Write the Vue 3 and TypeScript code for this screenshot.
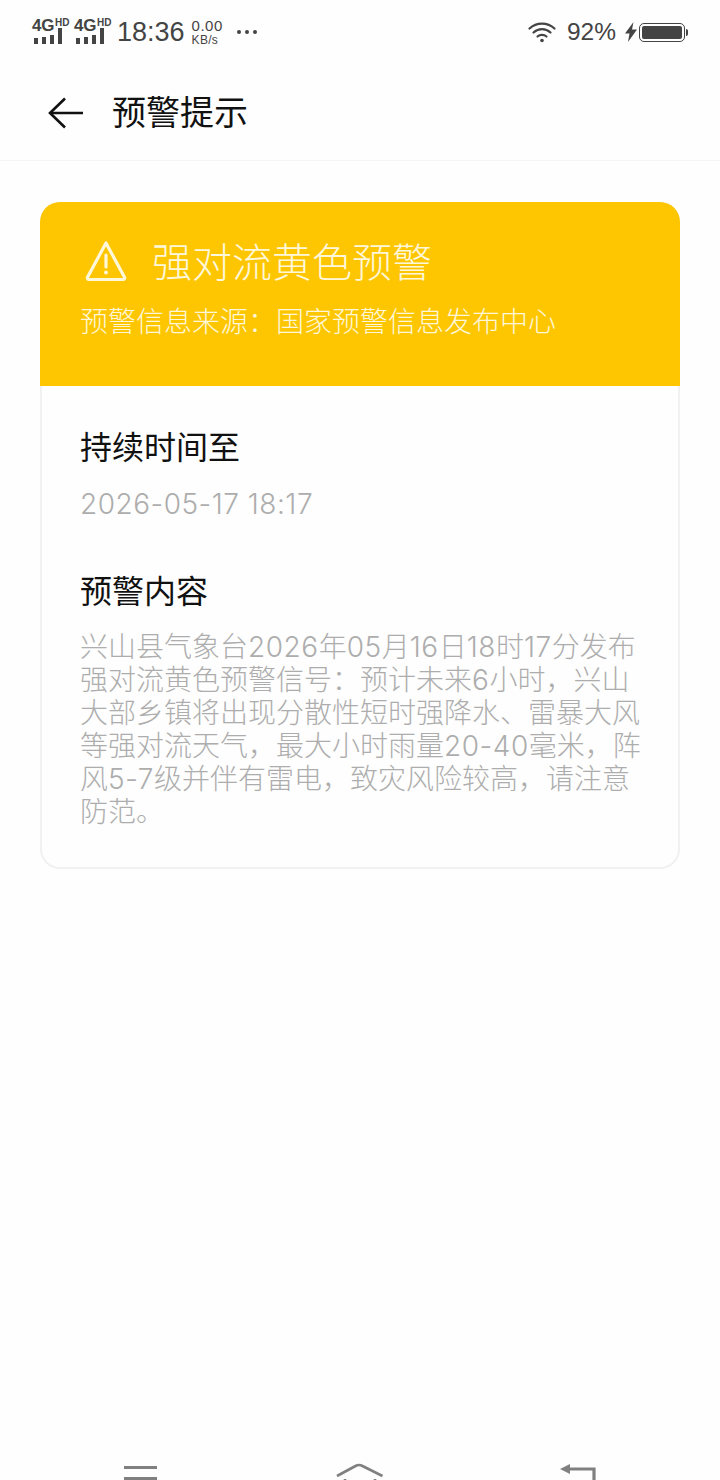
<script setup lang="ts">
const lines: string[] = [
  '兴山县气象台2026年05月16日18时17分发布',
  '强对流黄色预警信号：预计未来6小时，兴山',
  '大部乡镇将出现分散性短时强降水、雷暴大风',
  '等强对流天气，最大小时雨量20-40毫米，阵',
  '风5-7级并伴有雷电，致灾风险较高，请注意',
  '防范。',
]

const segment = (line: string): string[] => line.split(/(\d[\d-]*)/)
</script>

<template>
  <div class="page">
    <div class="status">
      <div class="status-left">
        <div v-for="n in 2" :key="n" class="net">
          <div class="net-label"><span class="g">4G</span><span class="hd">HD</span></div>
          <div class="bars"><i class="b1"></i><i class="b2"></i><i class="b3"></i><i class="b4"></i></div>
        </div>
        <span class="time">18:36</span>
        <div class="speed"><span class="rate">0.00</span><span class="kb">KB/s</span></div>
        <div class="dots"><i></i><i></i><i></i></div>
      </div>
      <div class="status-right">
        <svg class="wifi" width="28" height="22" viewBox="0 0 28 22" fill="none" stroke="#444" stroke-width="2.2" stroke-linecap="round">
          <path d="M1.5 7.5C8.5 1 19.5 1 26.5 7.5" />
          <path d="M5.5 11.5C10.5 7 17.5 7 22.5 11.5" />
          <path d="M9.5 15.5C12 13.2 16 13.2 18.5 15.5" />
          <circle cx="14" cy="19.5" r="1.8" fill="#444" stroke="none" />
        </svg>
        <span class="pct">92%</span>
        <svg class="bolt" width="12" height="20" viewBox="0 0 12 20"><path d="M8.5 0 0 11.5h4.5L3 20 12 7.5H7Z" fill="#444" /></svg>
        <div class="battery"><div class="fill"></div></div>
        <div class="nub"></div>
      </div>
    </div>

    <header class="bar">
      <svg class="back" width="36" height="32" viewBox="0 0 36 32" fill="none" stroke="#111" stroke-width="2.6">
        <path d="M35 16H2" />
        <path d="M17 1.5 2 16l15 14.5" />
      </svg>
      <h1 class="title">预警提示</h1>
    </header>

    <main class="content">
      <section class="card">
        <div class="banner">
          <div class="headline">
            <svg class="warn" width="42" height="42" viewBox="0 0 42 42" fill="none" stroke="#fff7d9" stroke-width="3.2" stroke-linejoin="round">
              <path d="M21 2 2.5 36.3a1.5 1.5 0 0 0 1.3 2.2h34.4a1.5 1.5 0 0 0 1.3-2.2Z" />
              <path d="M21 14v12" stroke-linecap="round" />
              <circle cx="21" cy="31.5" r="2" fill="#fff7d9" stroke="none" />
            </svg>
            <span class="headline-text">强对流黄色预警</span>
          </div>
          <div class="source">预警信息来源：国家预警信息发布中心</div>
        </div>
        <div class="details">
          <div class="label">持续时间至</div>
          <div class="date">2026-05-17 18:17</div>
          <div class="label second">预警内容</div>
          <div class="body">
            <div v-for="line in lines" :key="line">
              <span v-for="(part, i) in segment(line)" :key="i" :class="{ num: i % 2 === 1 }">{{ part }}</span>
            </div>
          </div>
        </div>
      </section>
    </main>

    <nav class="nav">
      <svg width="34" height="17" viewBox="0 0 34 17" fill="none" stroke="#808080" stroke-width="3"><path d="M0 4.5h33M0 15.5h33" /></svg>
      <svg width="48" height="17" viewBox="0 0 48 17" fill="none" stroke="#808080" stroke-width="2.6" stroke-linejoin="round"><path d="M2 13 20.5 3q3.5-2 7 0L47.5 13" /><path d="M10 16v1M40 16v1" /></svg>
      <svg width="36" height="17" viewBox="0 0 36 17" fill="none"><path d="M34 17V6H5" stroke="#808080" stroke-width="3.2" /><path d="M0 6l10-5v10Z" fill="#808080" /></svg>
    </nav>
  </div>
</template>

<style>
html, body { margin: 0; background: #fefefe; }
</style>

<style scoped>
.page {
  width: 720px;
  height: 1480px;
  overflow: hidden;
  display: flex;
  flex-direction: column;
  background: #fefefe;
  font-family: Roboto, "Noto Sans CJK SC", sans-serif;
}
.status {
  height: 64px;
  box-sizing: border-box;
  padding: 0 32px;
  display: flex;
  align-items: center;
  justify-content: space-between;
  color: #444;
}
.status-left, .status-right { display: flex; align-items: center; }
.net { width: 42px; margin-top: -1px; display: flex; flex-direction: column; align-items: flex-start; font-family: "Liberation Sans", sans-serif; font-weight: 700; }
.net-label { height: 13px; display: flex; align-items: flex-start; line-height: 13px; }
.g { font-size: 17px; letter-spacing: -0.3px; }
.hd { font-size: 10px; line-height: 10px; margin-left: 1px; margin-top: -1px; }
.bars { display: flex; align-items: flex-end; gap: 4px; height: 16px; margin-top: -4px; margin-left: 2px; }
.bars i { display: block; width: 4px; background: #444; }
.b1 { height: 6px; } .b2 { height: 7px; } .b3 { height: 9px; } .b4 { height: 16px; }
.time { font-family: "Liberation Sans", sans-serif; font-size: 27px; margin-left: 1px; color: #444; }
.speed { display: flex; flex-direction: column; gap: 1px; margin-left: 7px; width: 34px; align-items: flex-start; font-family: "Liberation Sans", sans-serif; }
.rate { font-size: 15px; line-height: 14px; letter-spacing: 0.5px; }
.kb { font-size: 12px; line-height: 12px; letter-spacing: 0.3px; }
.dots { display: flex; gap: 4px; margin-left: 11px; }
.dots i { width: 4px; height: 4px; border-radius: 50%; background: #444; }
.wifi { margin-right: 11px; }
.pct { font-family: "Liberation Sans", sans-serif; font-size: 24.5px; margin-right: 9px; }
.bolt { margin-right: 2px; }
.battery { width: 46px; height: 19px; box-sizing: border-box; border: 1.5px solid #444; border-radius: 5px; padding: 2px; background: #fff; }
.fill { height: 100%; width: 100%; background: #444; border-radius: 2px; }
.nub { width: 2px; height: 7px; background: #444; border-radius: 0 2px 2px 0; margin-left: 1px; }

.bar {
  height: 97px;
  box-sizing: border-box;
  display: flex;
  align-items: center;
  padding: 0 0 0 48px;
  border-bottom: 1px solid #f4f4f4;
}
.back { margin-right: 28px; margin-top: 2px; }
.title { margin: 0; font-size: 34px; font-weight: 400; color: #111; line-height: 1; margin-top: 2px; }

.content { flex: 1; padding: 41px 40px 0; }
.card {
  border-radius: 20px;
  overflow: hidden;
  background: #fefefe;
  box-shadow: inset 0 0 0 2px #f1f1f1;
}
.banner {
  height: 184px;
  box-sizing: border-box;
  padding: 38px 0 0 40px;
  background: #fec601;
  color: #fff7d9;
}
.headline { display: flex; align-items: center; height: 48px; }
.warn { margin-left: 5px; margin-right: 25px; margin-bottom: 5px; }
.headline-text { font-size: 40px; font-weight: 300; line-height: 48px; }
.source { font-size: 28px; font-weight: 300; line-height: 40px; margin-top: 15px; }
.details { padding: 42px 40px 40px; }
.label { font-size: 32px; line-height: 40px; color: #111; }
.second { margin-top: 48px; }
.date { margin-top: 16px; font-family: Inter, sans-serif; font-weight: 300; font-size: 28px; line-height: 40px; color: #adadad; letter-spacing: 0.5px; }
.body { margin-top: 19px; font-family: Inter, "Noto Sans CJK SC", sans-serif; font-weight: 300; font-size: 28px; line-height: 33px; color: #adadad; white-space: nowrap; }
.num { letter-spacing: 0.55px; }

.nav {
  height: 17px;
  padding: 0 124px;
  display: flex;
  justify-content: space-between;
  align-items: flex-start;
  flex: none;
}
</style>
